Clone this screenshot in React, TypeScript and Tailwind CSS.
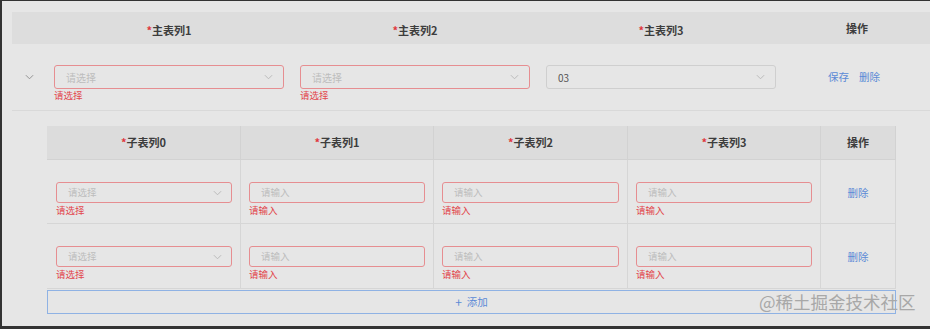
import React from 'react';

const font = { fontFamily: '"Noto Sans CJK SC", "Noto Sans", sans-serif' };

const Chevron: React.FC<{ className?: string }> = ({ className }) => (
  <svg viewBox="0 0 10 6" className={className} fill="none" stroke="currentColor" strokeWidth="1">
    <polyline points="1,1 5,5 9,1" />
  </svg>
);

const Required: React.FC<{ label: string }> = ({ label }) => (
  <span className="text-[11px] font-bold text-[#3d3d3d]">
    <span className="text-[#e0383e]">*</span>
    {label}
  </span>
);

const MainSelect: React.FC<{ value?: string }> = ({ value }) => (
  <div>
    <div
      className={`h-[24px] rounded-[3px] border flex items-center justify-between pl-[11px] pr-[10px] ${
        value ? 'border-[#cfcfcf]' : 'border-[#e68e91]'
      }`}
    >
      <span className={`text-[10px] ${value ? 'text-[#555]' : 'text-[#bdbdbd]'}`}>{value ?? '请选择'}</span>
      <Chevron className="w-[9px] h-[6px] text-[#b5b5b5]" />
    </div>
    {!value && <div className="text-[9.5px] leading-[12px] text-[#e2474d]">请选择</div>}
  </div>
);

const SubField: React.FC<{ select?: boolean }> = ({ select }) => {
  const text = select ? '请选择' : '请输入';
  return (
    <div>
      <div className="h-[21px] rounded-[3px] border border-[#e68e91] flex items-center justify-between pl-[11px] pr-[9px]">
        <span className="text-[9.5px] text-[#bdbdbd]">{text}</span>
        {select && <Chevron className="w-[9px] h-[6px] text-[#b5b5b5]" />}
      </div>
      <div className="text-[9.5px] leading-[12px] mt-[1px] text-[#e2474d]">{text}</div>
    </div>
  );
};

const mainCols = 'grid grid-cols-[34px_246px_246px_246px_146px]';
const subCols = 'grid grid-cols-[194px_193px_194px_193px_75px]';

const SubRow: React.FC<{ height: string }> = ({ height }) => (
  <div className={`${subCols} ${height} border-b border-[#d6d6d6]`}>
    <div className="border-r border-[#d6d6d6] pl-[9px] pr-[8px] pt-[22px]">
      <SubField select />
    </div>
    {[0, 1, 2].map(i => (
      <div key={i} className="border-r border-[#d6d6d6] pl-[8px] pr-[8px] pt-[22px]">
        <SubField />
      </div>
    ))}
    <div className="border-r border-[#d6d6d6] flex justify-center pt-[25px]">
      <span className="text-[10.5px] text-[#5b8ad6]">删除</span>
    </div>
  </div>
);

export default function App() {
  return (
    <div
      style={font}
      className="relative w-[930px] h-[329px] overflow-hidden bg-[#e6e6e6] border-l-2 border-t border-b-[3px] border-[#333]"
    >
      <div className="pl-[10px] pt-[11px]">
        {/* Main header */}
        <div className={`${mainCols} h-[32px] bg-[#dddddd] items-center`}>
          <div />
          <div className="text-center"><Required label="主表列1" /></div>
          <div className="text-center"><Required label="主表列2" /></div>
          <div className="text-center"><Required label="主表列3" /></div>
          <div className="text-center text-[11px] font-bold text-[#3d3d3d]">操作</div>
        </div>

        {/* Main row */}
        <div className={`${mainCols} h-[67px] border-b border-[#d9d9d9] pt-[21px]`}>
          <div className="flex justify-center h-[24px] items-center">
            <Chevron className="w-[9px] h-[6px] text-[#8a8a8a]" />
          </div>
          <div className="px-[8px]"><MainSelect /></div>
          <div className="px-[8px]"><MainSelect /></div>
          <div className="px-[8px]"><MainSelect value="03" /></div>
          <div className="flex justify-center gap-[10px] h-[24px] items-center pr-[6px]">
            <span className="text-[10.5px] text-[#5b8ad6]">保存</span>
            <span className="text-[10.5px] text-[#5b8ad6]">删除</span>
          </div>
        </div>

        {/* Expanded sub table */}
        <div className="pl-[35px] pt-[15px]">
          <div className="w-[849px]">
            <div className={`${subCols} h-[34px] bg-[#dcdcdc] border-b border-[#d2d2d2] items-center`}>
              {['子表列0', '子表列1', '子表列2', '子表列3'].map(l => (
                <div key={l} className="h-full flex items-center justify-center border-r border-[#d2d2d2]">
                  <Required label={l} />
                </div>
              ))}
              <div className="h-full flex items-center justify-center border-r border-[#d2d2d2] text-[11px] font-bold text-[#3d3d3d]">
                操作
              </div>
            </div>
            <SubRow height="h-[64px]" />
            <SubRow height="h-[65px]" />
            <div className="mt-[1px] h-[24px] border border-[#8fb2e4] flex items-center justify-center gap-[5px] text-[10.5px] text-[#5b8ad6]">
              <span className="text-[12px] leading-none">+</span>
              <span>添加</span>
            </div>
          </div>
        </div>
      </div>

      {/* watermark */}
      <div className="absolute left-[757px] top-[289px] text-[17.5px] leading-[24px] text-[#a8a8a8] whitespace-nowrap">
        @稀土掘金技术社区
      </div>
    </div>
  );
}
